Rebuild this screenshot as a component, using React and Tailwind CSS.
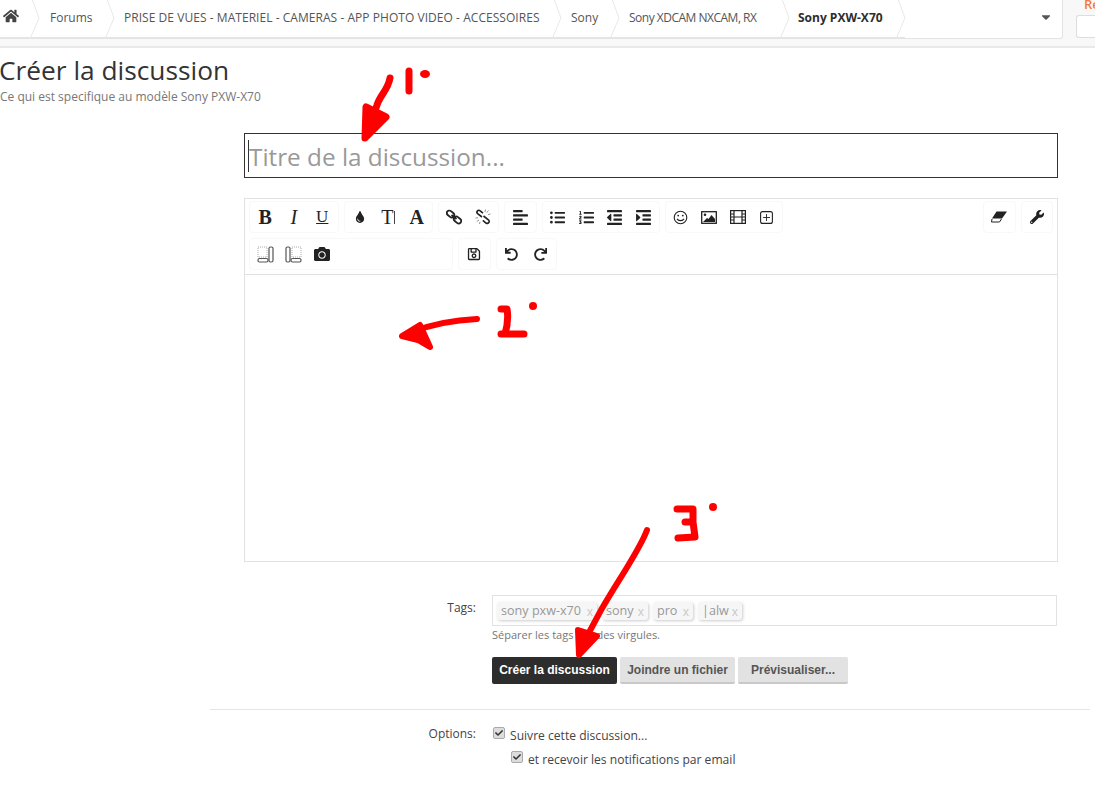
import {
  FaHome,
  FaCaretDown,
  FaTint,
  FaAlignLeft,
  FaListUl,
  FaListOl,
  FaOutdent,
  FaIndent,
  FaWrench,
  FaCamera,
  FaRegSave,
  FaUndo,
  FaRedo,
  FaCheck,
} from "react-icons/fa";

const crumbs = [
  { label: "Forums", width: "w-[75px]", pad: "pl-[11px]" },
  { label: "PRISE DE VUES - MATERIEL - CAMERAS - APP PHOTO VIDEO - ACCESSOIRES", width: "w-[447px]", pad: "pl-[10px] tracking-[0.045px]" },
  { label: "Sony", width: "w-[58px]", pad: "pl-[10px]" },
  { label: "Sony XDCAM NXCAM, RX", width: "w-[170px]", pad: "pl-[10px] tracking-[-0.5px]" },
  { label: "Sony PXW-X70", width: "w-[116px]", pad: "pl-[9px]", current: true },
];

// arrow between two breadcrumb items
const Chevron = () => (
  <svg className="absolute right-[-1px] top-0 h-[39px] w-[10px]" viewBox="0 0 10 39" fill="none">
    <path d="M2 -1 L9 18 L0 39" stroke="#e8e8e8" strokeWidth="1" />
  </svg>
);

const Crumb = ({ children, width, pad, bold }) => (
  <div className={`relative flex h-[39px] shrink-0 items-center border-b-2 border-[#e4e4e4] pb-[2px] ${width} ${pad} ${bold ? "font-bold text-[#2d2d2d]" : "text-[#555]"}`}>
    <span className="whitespace-nowrap">{children}</span>
    <Chevron />
  </div>
);

const SplitLeft = () => (
  <svg width="17" height="17" viewBox="0 0 17 17" fill="none">
    <rect x="1" y="1" width="9" height="10" stroke="#aaa" strokeDasharray="1 1" />
    <rect x="1" y="12.5" width="10" height="3.5" rx="1.5" stroke="#555" strokeWidth="1.2" />
    <rect x="12" y="1" width="4" height="15" rx="1.5" stroke="#555" strokeWidth="1.2" />
  </svg>
);

const SplitRight = () => (
  <svg width="17" height="17" viewBox="0 0 17 17" fill="none">
    <rect x="7" y="1" width="9" height="10" stroke="#aaa" strokeDasharray="1 1" />
    <rect x="6" y="12.5" width="10" height="3.5" rx="1.5" stroke="#555" strokeWidth="1.2" />
    <rect x="1" y="1" width="4" height="15" rx="1.5" stroke="#555" strokeWidth="1.2" />
  </svg>
);

const LinkIcon = () => (
  <svg width="16" height="16" viewBox="0 0 16 16" fill="none" stroke="#222" strokeWidth="1.8">
    <rect x="0.5" y="2.5" width="8" height="5" rx="2.5" transform="rotate(40 4.5 5)" />
    <rect x="7.5" y="8.5" width="8" height="5" rx="2.5" transform="rotate(40 11.5 11)" />
    <path d="M5.5 6 L10.5 10" />
  </svg>
);

const UnlinkIcon = () => (
  <svg width="16" height="16" viewBox="0 0 16 16" fill="none" stroke="#222" strokeWidth="1.6">
    <path d="M7 8 L2.6 4.6 A1.9 1.9 0 0 1 5.2 1.8 L8 4.2" />
    <path d="M8.5 7 L13.4 10.8 A1.9 1.9 0 0 1 11 14 L7.8 11.4" />
    <path d="M10.5 0.5 L10 3 M13.5 1.5 L11.8 3.6 M15.5 5 L13 5.5 M0.5 9 L3 8.8 M1.8 12.5 L4 11 M4.5 15 L5 12.8" stroke="#888" strokeWidth="0.9" />
  </svg>
);

const SmileIcon = () => (
  <svg width="15" height="15" viewBox="0 0 15 15" fill="none" stroke="#222" strokeWidth="1.1">
    <circle cx="7.5" cy="7.5" r="6.3" />
    <circle cx="5.2" cy="5.6" r="0.9" fill="#222" stroke="none" />
    <circle cx="9.8" cy="5.6" r="0.9" fill="#222" stroke="none" />
    <path d="M4 9 Q7.5 12.4 11 9" />
  </svg>
);

const ImageIcon = () => (
  <svg width="16" height="13" viewBox="0 0 16 13" fill="none">
    <rect x="0.7" y="0.7" width="14.6" height="11.6" stroke="#222" strokeWidth="1.3" />
    <circle cx="4" cy="3.7" r="1.3" fill="#222" />
    <path d="M2 11 L6 7 L7.5 8 L10.5 4 L14 8 V11 Z" fill="#222" />
  </svg>
);

const FilmIcon = () => (
  <svg width="16" height="14" viewBox="0 0 16 14" fill="none" stroke="#222" strokeWidth="1.2">
    <rect x="0.6" y="0.6" width="14.8" height="12.8" />
    <path d="M4 0.6 V13.4 M12 0.6 V13.4 M4 7 H12 M0.6 4 H4 M0.6 7 H4 M0.6 10 H4 M12 4 H15.4 M12 7 H15.4 M12 10 H15.4" />
  </svg>
);

const PlusBoxIcon = () => (
  <svg width="13" height="13" viewBox="0 0 13 13" fill="none" stroke="#222">
    <rect x="0.6" y="0.6" width="11.8" height="11.8" rx="2" strokeWidth="1.1" />
    <path d="M6.5 3 V10 M3 6.5 H10" strokeWidth="0.9" />
  </svg>
);

const EraserIcon = () => (
  <svg width="16" height="12" viewBox="0 0 16 12" fill="none">
    <path d="M5.5 0.5 H16 L11 7.5 H1 Z" fill="#222" />
    <path d="M1 8 L0.5 11 H8.5 L10.5 8" stroke="#222" strokeWidth="1" />
  </svg>
);

const Tool = ({ children }) => (
  <div className="flex h-full w-[28.5px] items-center justify-center text-[#222]">{children}</div>
);

const Group = ({ children, className = "" }) => (
  <div className={`flex h-[32px] items-center rounded-sm border border-[#f8f8f8] px-px ${className}`}>{children}</div>
);

const Tag = ({ children, width }) => (
  <span className={`flex h-[18px] items-center justify-between rounded-[3px] bg-[#f6f6f6] px-[4px] pt-[2px] text-[12.6px] text-[#999] shadow-[1px_1px_3px_#ccc] ${width}`}>
    {children}
    <span className="text-[12px] text-[#c8c8c8]">x</span>
  </span>
);

const Check = () => (
  <span className="flex h-[12px] w-[12px] items-center justify-center rounded-[2px] border border-[#aaa] bg-[#ddd] text-[#333]">
    <FaCheck size={8} />
  </span>
);

// red marker scribbles drawn on top of the screenshot
const Annotations = () => (
  <svg className="pointer-events-none absolute left-0 top-0 h-[800px] w-[1095px]" viewBox="0 0 1095 800" fill="none" stroke="#f00" strokeLinecap="round" strokeLinejoin="round">
    <path d="M390 78 C388 90 380 95 377 105 L370 126" strokeWidth="7" />
    <path d="M366 107 L365 138 L386 117 Z M374 118 L379 119 L375 121 Z" fill="#f00" fillRule="evenodd" stroke="#f00" strokeWidth="7" />
    <path d="M409 71 L409 91" strokeWidth="7" />
    <ellipse cx="425" cy="74" rx="5" ry="4" fill="#f00" stroke="none" />

    <path d="M477 319 C455 320 435 323 412 332" strokeWidth="6" />
    <path d="M402 336 L420 325 L430 347 L418 340 Z" fill="#f00" strokeWidth="6" />
    <path d="M501 309 L507 309 Q509 320 505 334 M501 334 L524 334" strokeWidth="7" />
    <circle cx="533" cy="306" r="4" fill="#f00" stroke="none" />

    <path d="M647 530 C640 550 615 585 600 612 L585 640" strokeWidth="6" />
    <path d="M578 630 L597 636 L579 655 Z" fill="#f00" strokeWidth="6" />
    <path d="M677 509 L693 509 L693 522 L685 522 M693 522 L695 537 L678 538" strokeWidth="7" />
    <circle cx="713" cy="507" r="4" fill="#f00" stroke="none" />
  </svg>
);

const App = () => {
  return (
    <div className="relative h-[800px] w-[1095px] overflow-hidden bg-white font-['Open_Sans',sans-serif] text-[12px] text-[#444]">
      {/* Breadcrumb bar */}
      <div className="flex h-[48px] border-b-2 border-[#e9e9e9] bg-[#f8f8f8]">
        <div className="relative flex h-[39px] w-[1063px] shrink-0 rounded-br-[3px] border-r border-b border-[#e4e4e4] bg-white">
          <Crumb width="w-[39px]" pad="pl-[3px]">
            <FaHome size={16} className="mb-1 text-[#444]" />
          </Crumb>
          {crumbs.map((c) => (
            <Crumb key={c.label} width={c.width} pad={c.pad} bold={c.current}>
              {c.label}
            </Crumb>
          ))}
          <FaCaretDown size={14} className="absolute right-[9px] top-[10px] text-[#555]" />
        </div>
        <div className="ml-[13px] flex-1">
          <div className="ml-[8px] h-[15px] text-[13px] font-semibold leading-[8px] text-[#f47a3d]">Re</div>
          <div className="h-[23px] rounded-l-[3px] border border-r-0 border-[#ddd] bg-white"></div>
        </div>
      </div>

      {/* Title */}
      <h1 className="-ml-px mt-[4px] text-[26.3px] leading-[36px] font-normal text-[#333]">Créer la discussion</h1>
      <p className="mt-[1px] text-[12px] leading-[15px] text-[#777]">Ce qui est specifique au modèle Sony PXW-X70</p>

      {/* Form */}
      <div className="ml-[244px] mt-[29px] w-[814px]">
        <div className="flex h-[45px] items-center border border-[#333] pl-[3px] text-[24.3px] text-[#999]">
          <span className="h-[32px] w-px bg-[#333]"></span>
          <span className="pt-[3px]">Titre de la discussion...</span>
        </div>

        <div className="mt-[20px] h-[364px] border border-[#e2e2e2]">
          <div className="flex h-[76px] flex-col gap-[5px] border-b border-[#e2e2e2] px-[4px] pt-[2px]">
            <div className="flex gap-[5px]">
              <Group>
                <Tool><span className="font-['Liberation_Serif',serif] text-[20px] font-bold">B</span></Tool>
                <Tool><span className="font-['Liberation_Serif',serif] text-[20px] italic">I</span></Tool>
                <Tool><span className="font-['Liberation_Serif',serif] text-[17px] underline">U</span></Tool>
              </Group>
              <Group>
                <Tool><FaTint size={12} /></Tool>
                <Tool>
                  <span className="flex items-center gap-px font-['Liberation_Serif',serif] text-[20px]">
                    T<span className="h-[13px] w-px bg-[#444]"></span>
                  </span>
                </Tool>
                <Tool><span className="font-['Liberation_Serif',serif] text-[20px] font-bold">A</span></Tool>
              </Group>
              <Group>
                <Tool><LinkIcon /></Tool>
                <Tool><UnlinkIcon /></Tool>
              </Group>
              <Group>
                <Tool><FaAlignLeft size={17} /></Tool>
              </Group>
              <Group>
                <Tool><FaListUl size={15} /></Tool>
                <Tool><FaListOl size={15} /></Tool>
                <Tool><FaOutdent size={17} /></Tool>
                <Tool><FaIndent size={17} /></Tool>
              </Group>
              <Group>
                <Tool><SmileIcon /></Tool>
                <Tool><ImageIcon /></Tool>
                <Tool><FilmIcon /></Tool>
                <Tool><PlusBoxIcon /></Tool>
              </Group>
              <Group className="ml-auto">
                <Tool><EraserIcon /></Tool>
              </Group>
              <Group>
                <Tool><FaWrench size={14} /></Tool>
              </Group>
            </div>
            <div className="flex gap-[5px]">
              <Group className="w-[204px]">
                <Tool><SplitLeft /></Tool>
                <Tool><SplitRight /></Tool>
                <Tool><FaCamera size={16} /></Tool>
              </Group>
              <Group>
                <Tool><FaRegSave size={14} /></Tool>
              </Group>
              <Group>
                <Tool><FaUndo size={13} /></Tool>
                <Tool><FaRedo size={13} /></Tool>
              </Group>
            </div>
          </div>
        </div>
      </div>

      {/* Tags */}
      <div className="ml-[210px] mt-[33px] mr-[5px]">
        <div className="flex">
          <div className="w-[266px] pt-[4px] text-right">Tags:</div>
          <div className="ml-[16px] w-[565px]">
            <div className="flex h-[31px] items-center gap-[5px] border border-[#e2e2e2] pl-[4px]">
              <Tag width="w-[100px]">sony pxw-x70</Tag>
              <Tag width="w-[46px]">sony</Tag>
              <Tag width="w-[40px]">pro</Tag>
              <Tag width="w-[44px]">|alw</Tag>
            </div>
            <p className="mt-[1px] text-[11px] leading-[16px] text-[#777]">Séparer les tags par des virgules.</p>
            <div className="mt-[14px] flex gap-[3px] font-['Liberation_Sans',sans-serif] font-bold">
              <button className="h-[27px] w-[125px] rounded-[2px] bg-[#2d2d2d] pb-[2px] text-white">Créer la discussion</button>
              <button className="h-[27px] w-[115px] rounded-[2px] border-b-2 border-[#c8c8c8] bg-[#e2e2e2] text-[#555]">Joindre un fichier</button>
              <button className="h-[27px] w-[110px] rounded-[2px] border-b-2 border-[#c8c8c8] bg-[#e2e2e2] text-[#555]">Prévisualiser...</button>
            </div>
          </div>
        </div>

        <div className="mt-[25px] border-t border-[#e4e4e4]"></div>

        {/* Options */}
        <div className="mt-[17px] flex">
          <div className="-mt-[2px] w-[266px] text-right">Options:</div>
          <div className="ml-[17px] text-[12.1px]">
            <div className="flex items-start gap-[5px]">
              <Check />
              <span className="leading-[17px]">Suivre cette discussion...</span>
            </div>
            <div className="ml-[18px] mt-[7px] flex items-start gap-[5px]">
              <Check />
              <span className="leading-[17px]">et recevoir les notifications par email</span>
            </div>
          </div>
        </div>
      </div>

      <Annotations />
    </div>
  );
};

export default App;
